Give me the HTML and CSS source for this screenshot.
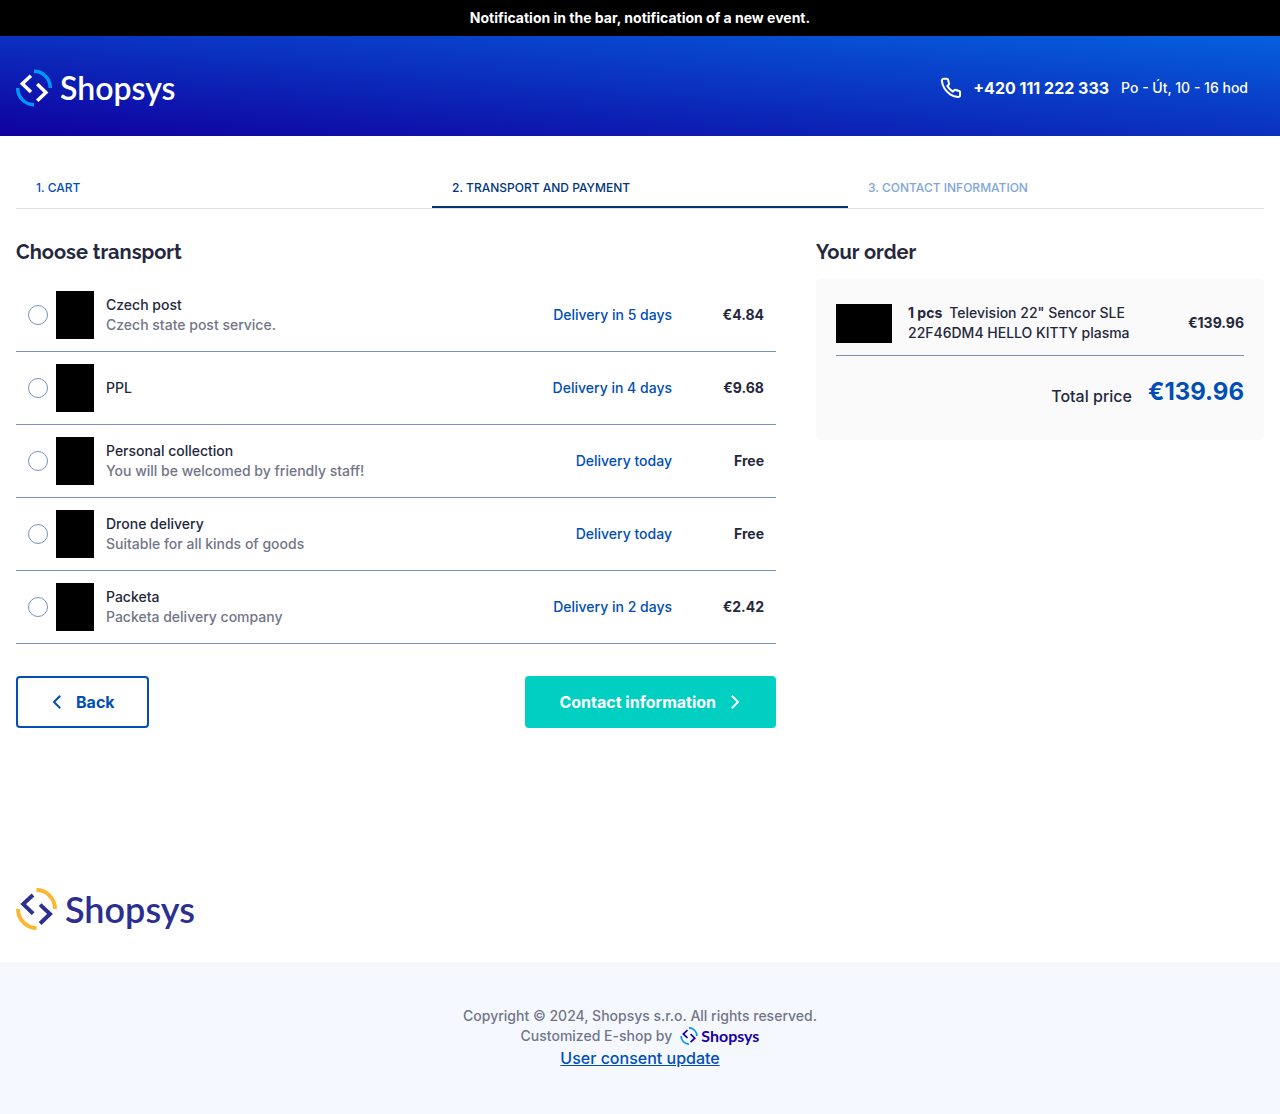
FILE: index.html
```
<!DOCTYPE html>
<html lang="en">
<head>
<meta charset="utf-8">
<meta name="viewport" content="width=device-width, initial-scale=1">
<title>Transport and payment | Shopsys</title>
<link rel="stylesheet" href="styles.css">
</head>
<body>
<svg class="sprite" aria-hidden="true">
  <symbol id="logo-mark" viewBox="0 0 36 37">
    <path class="logo-arc" d="M18 1.7A16.3 16.8 0 0 1 34.3 18.5M18 35.3A16.3 16.8 0 0 1 1.7 18.5"/>
    <path class="logo-chevron" d="M14.9 6.2 6.3 14.2 15 22.6M21.2 14.6 29.9 22.9 21.2 31.3"/>
  </symbol>
  <symbol id="arrow" viewBox="0 0 16 16">
    <path d="M5.8 1.8 12 8 5.8 14.2" fill="none" stroke="currentColor" stroke-width="2"/>
  </symbol>
</svg>

<div class="notification">Notification in the bar, notification of a new event.</div>

<header class="header">
  <a class="logo logo-header" href="#"><svg class="logo-mark" aria-hidden="true"><use href="#logo-mark"/></svg><span>Shopsys</span></a>
  <div class="contact">
    <svg class="phone-icon" viewBox="-1 0 24 24" aria-hidden="true"><path d="M22 16.92v3a2 2 0 0 1-2.18 2 19.79 19.79 0 0 1-8.63-3.07 19.5 19.5 0 0 1-6-6 19.79 19.79 0 0 1-3.07-8.67A2 2 0 0 1 4.11 2h3a2 2 0 0 1 2 1.72c.13.96.36 1.9.7 2.81a2 2 0 0 1-.45 2.11L8.09 9.91a16 16 0 0 0 6 6l1.27-1.27a2 2 0 0 1 2.11-.45c.91.34 1.85.57 2.81.7A2 2 0 0 1 22 16.92z"/></svg>
    <a class="contact-phone" href="tel:+420111222333">+420 111 222 333</a>
    <span class="contact-hours">Po - Út, 10 - 16 hod</span>
  </div>
</header>

<main class="main">
  <nav aria-label="Order steps">
    <ol class="steps">
      <li class="step"><a href="#">1. Cart</a></li>
      <li class="step step-active" aria-current="step">2. Transport and payment</li>
      <li class="step step-disabled">3. Contact information</li>
    </ol>
  </nav>

  <div class="columns">
    <form class="transport">
      <h2 class="heading">Choose transport</h2>
      <ul class="options">
        <li class="option">
          <input class="radio" type="radio" name="transport" id="czech-post">
          <label class="option-label" for="czech-post">
            <span class="option-image"></span>
            <span class="option-text"><span>Czech post</span><span class="muted">Czech state post service.</span></span>
            <span class="delivery">Delivery in 5 days</span>
            <span class="price">€4.84</span>
          </label>
        </li>
        <li class="option">
          <input class="radio" type="radio" name="transport" id="ppl">
          <label class="option-label" for="ppl">
            <span class="option-image"></span>
            <span class="option-text"><span>PPL</span></span>
            <span class="delivery">Delivery in 4 days</span>
            <span class="price">€9.68</span>
          </label>
        </li>
        <li class="option">
          <input class="radio" type="radio" name="transport" id="personal">
          <label class="option-label" for="personal">
            <span class="option-image"></span>
            <span class="option-text"><span>Personal collection</span><span class="muted">You will be welcomed by friendly staff!</span></span>
            <span class="delivery">Delivery today</span>
            <span class="price">Free</span>
          </label>
        </li>
        <li class="option">
          <input class="radio" type="radio" name="transport" id="drone">
          <label class="option-label" for="drone">
            <span class="option-image"></span>
            <span class="option-text"><span>Drone delivery</span><span class="muted">Suitable for all kinds of goods</span></span>
            <span class="delivery">Delivery today</span>
            <span class="price">Free</span>
          </label>
        </li>
        <li class="option">
          <input class="radio" type="radio" name="transport" id="packeta">
          <label class="option-label" for="packeta">
            <span class="option-image"></span>
            <span class="option-text"><span>Packeta</span><span class="muted">Packeta delivery company</span></span>
            <span class="delivery">Delivery in 2 days</span>
            <span class="price">€2.42</span>
          </label>
        </li>
      </ul>
      <div class="actions">
        <button class="button button-back" type="button"><svg class="arrow arrow-left" aria-hidden="true"><use href="#arrow"/></svg>Back</button>
        <button class="button button-next" type="submit">Contact information<svg class="arrow" aria-hidden="true"><use href="#arrow"/></svg></button>
      </div>
    </form>

    <aside>
      <h2 class="heading">Your order</h2>
      <div class="order">
        <div class="order-item">
          <span class="order-image"></span>
          <p class="order-name"><b class="order-count">1 pcs</b>Television 22" Sencor SLE 22F46DM4 HELLO KITTY plasma</p>
          <span class="order-price">€139.96</span>
        </div>
        <div class="total">
          <span class="total-label">Total price</span>
          <strong class="total-price">€139.96</strong>
        </div>
      </div>
    </aside>
  </div>

  <a class="logo logo-brand" href="#"><svg class="logo-mark" aria-hidden="true"><use href="#logo-mark"/></svg><span>Shopsys</span></a>
</main>

<footer class="footer">
  <p>Copyright © 2024, Shopsys s.r.o. All rights reserved.</p>
  <p class="credits">Customized E-shop by <a class="logo logo-small" href="#"><svg class="logo-mark" aria-hidden="true"><use href="#logo-mark"/></svg><span>Shopsys</span></a></p>
  <a class="consent" href="#">User consent update</a>
</footer>
</body>
</html>
```
FILE: styles.css
```
* {
  box-sizing: border-box;
}

body {
  margin: 0;
  background: #fff;
  color: #25283d;
  font: 500 14px/20px Inter, sans-serif;
}

h2, p, ul, ol {
  margin: 0;
  padding: 0;
}

ul, ol {
  list-style: none;
}

a {
  color: inherit;
  text-decoration: none;
}

.sprite {
  display: none;
}

.notification {
  padding: 8px 16px;
  background: #000;
  color: #fff;
  font-weight: 700;
  text-align: center;
}

/* Logo */
.logo {
  display: inline-flex;
  align-items: center;
  font-family: Lato, sans-serif;
  font-weight: 600;
  white-space: nowrap;
}

.logo-mark {
  flex: none;
  fill: none;
  stroke-width: 3.5;
}

.logo-arc {
  stroke: var(--arc);
}

.logo-chevron {
  stroke: currentColor;
}

.logo-header {
  --arc: #0098ff;
  gap: 8px;
  color: #fff;
  font-size: 32px;
  line-height: 38px;
}

.logo-header .logo-mark {
  width: 36px;
  height: 38px;
}

.logo-brand {
  --arc: #fbb731;
  gap: 8px;
  margin: 160px 0 32px;
  color: #2b2f8f;
  font-size: 36px;
  line-height: 42px;
}

.logo-brand .logo-mark {
  width: 41px;
  height: 42px;
}

.logo-small {
  --arc: #0098ff;
  gap: 3px;
  color: #1a00a0;
  font-size: 16px;
  font-weight: 700;
  line-height: 20px;
}

.logo-small .logo-mark {
  width: 18px;
  height: 18px;
}

/* Header */
.header {
  display: flex;
  align-items: center;
  justify-content: space-between;
  padding: 33px 16px 29px;
  background: linear-gradient(to top right, #1000a0, #0560dd);
  color: #fff;
}

.contact {
  display: flex;
  align-items: center;
  gap: 12px;
  padding-right: 16px;
}

.phone-icon {
  width: 22px;
  height: 22px;
  fill: none;
  stroke: currentColor;
  stroke-width: 2.2;
  stroke-linejoin: round;
}

.contact-phone {
  font-size: 16px;
  font-weight: 700;
}

/* Order steps */
.main {
  padding: 32px 16px 0;
}

.steps {
  display: grid;
  grid-template-columns: repeat(3, 1fr);
  border-bottom: 1px solid #e0e0e0;
}

.step {
  padding: 10px 20px 8px;
  border-bottom: 2px solid transparent;
  color: #004eb6;
  font-size: 12px;
  text-transform: uppercase;
}

.step-active {
  border-color: #00357c;
  color: #00357c;
}

.step-disabled {
  color: #7fa6da;
}

.columns {
  display: grid;
  grid-template-columns: minmax(0, 1fr) 448px;
  align-items: start;
  gap: 40px;
  margin-top: 30px;
}

.heading {
  margin-bottom: 14px;
  font: 700 20px/26px Raleway, Lato, sans-serif;
}

/* Transport list */
.option {
  display: flex;
  align-items: center;
  gap: 8px;
  padding: 12px;
  border-bottom: 1px solid #7892bc;
}

.radio {
  appearance: none;
  flex: none;
  width: 20px;
  height: 20px;
  margin: 0;
  border: 1px solid #7892bc;
  border-radius: 50%;
  background: #fff;
}

.radio:checked {
  border: 6px solid #004eb6;
}

.option-label {
  display: flex;
  flex: 1;
  align-items: center;
  gap: 12px;
  cursor: pointer;
}

.option-image {
  width: 38px;
  height: 48px;
  background: #000;
}

.option-text {
  display: flex;
  flex: 1;
  flex-direction: column;
}

.muted {
  color: #727588;
}

.delivery {
  color: #004eb6;
}

.price {
  width: 80px;
  font-weight: 700;
  text-align: right;
}

.actions {
  display: flex;
  justify-content: space-between;
  margin-top: 32px;
}

.button {
  display: flex;
  align-items: center;
  gap: 10px;
  padding: 12px 32px;
  border: 2px solid;
  border-radius: 4px;
  font: 700 16px/24px Inter, sans-serif;
  cursor: pointer;
}

.button-back {
  border-color: #004eb6;
  background: #fff;
  color: #004eb6;
}

.button-next {
  border-color: #00cfc1;
  background: #00cfc1;
  color: #fff;
}

.arrow {
  width: 16px;
  height: 16px;
}

.arrow-left {
  transform: rotate(180deg);
}

/* Order summary */
.order {
  padding: 12px 20px 32px;
  border-radius: 4px;
  background: #fafafa;
}

.order-item {
  display: flex;
  align-items: center;
  gap: 16px;
  padding: 12px 0;
  border-bottom: 1px solid #7892bc;
}

.order-image {
  width: 56px;
  height: 39px;
  background: #000;
}

.order-name {
  flex: 1;
  padding-right: 32px;
}

.order-count {
  margin-right: 7px;
}

.order-price {
  font-weight: 700;
}

.total {
  display: flex;
  align-items: flex-end;
  justify-content: flex-end;
  gap: 16px;
  padding-top: 20px;
}

.total-label {
  font-size: 16px;
  line-height: 24px;
}

.total-price {
  color: #004eb6;
  font-size: 24px;
  line-height: 32px;
}

/* Footer */
.footer {
  display: flex;
  flex-direction: column;
  align-items: center;
  padding: 44px 16px;
  background: #f5f9ff;
  color: #727588;
  text-align: center;
}

.credits {
  display: flex;
  gap: 8px;
}

.consent {
  color: #004eb6;
  font-size: 16px;
  line-height: 24px;
  text-decoration: underline;
}
```
